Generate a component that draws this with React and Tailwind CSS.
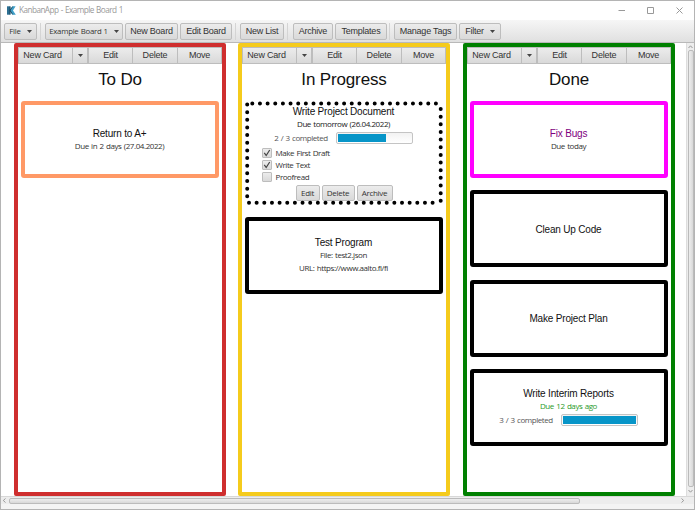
import React from "react";

const SANS = "font-['Liberation_Sans',Arial,sans-serif]";
const UI = "font-['Open_Sans','Noto_Sans',sans-serif]";
const FACE = "bg-linear-to-b from-[#ececec] to-[#d9d9d9] border border-[#bdbdbd]";

function Caret() {
  return (
    <svg width="5" height="3" viewBox="0 0 5 3" className="shrink-0">
      <path d="M0 0H5L2.5 3Z" fill="#444" />
    </svg>
  );
}

function ToolButton({ className, children }) {
  return (
    <div className={`flex h-[17px] shrink-0 items-center justify-center rounded-[2px] pt-px whitespace-nowrap text-[#333] ${FACE} ${className}`}>
      {children}
    </div>
  );
}

function Separator({ className }) {
  return <div className={`h-[17px] w-px shrink-0 bg-[#d4d4d4] ${className}`} />;
}

function Logo() {
  return (
    <svg width="9" height="9" viewBox="0 0 9 9" className="ml-[6px] shrink-0">
      <path d="M0 .3H3.4V8.7H0Z" fill="#2c6f92" />
      <path d="M8.6 .3H5.4L2.5 4.4L5.4 8.7H8.8L6 4.4Z" fill="#3f9fc8" />
      <path d="M3 .5V8.5M5.6 .6L3 4.4L5.6 8.4" stroke="#173c50" strokeWidth=".8" fill="none" />
    </svg>
  );
}

function TitleBar() {
  return (
    <div className="flex h-[19px] items-center bg-white">
      <Logo />
      <span className={`ml-[3px] text-[8.2px] tracking-[-0.55px] [word-spacing:0.7px] text-[#999] whitespace-nowrap ${UI}`}>KanbanApp - Example Board 1</span>
      <svg width="66" height="9" viewBox="0 0 66 9" className="mr-[10px] ml-auto" fill="none" stroke="#999" strokeWidth="1">
        <path d="M.5 4.5H7M29.5 1.5H35.5V7.5H29.5ZM58.5 1.5L64.5 7.5M64.5 1.5L58.5 7.5" />
      </svg>
    </div>
  );
}

function Toolbar() {
  return (
    <div className={`flex h-[23px] items-center border-b border-[#b9b9b9] bg-linear-to-b from-[#f6f6f6] to-[#e0e0e0] pl-[3px] text-[9px] tracking-[-0.25px] ${SANS}`}>
      <ToolButton className={`w-[33px] gap-[6px] text-[7.8px] ${UI}`}>File <Caret /></ToolButton>
      <Separator className="mr-1 ml-[3px]" />
      <ToolButton className={`w-[78px] gap-[6px] text-[7.8px] [word-spacing:0.4px] ${UI}`}>Example Board 1 <Caret /></ToolButton>
      <ToolButton className="ml-[2px] w-[53px]">New Board</ToolButton>
      <ToolButton className="ml-[2px] w-[52px]">Edit Board</ToolButton>
      <Separator className="mr-1 ml-[3px]" />
      <ToolButton className="w-[44px]">New List</ToolButton>
      <Separator className="mr-[5px] ml-[3px]" />
      <ToolButton className="w-[40px]">Archive</ToolButton>
      <ToolButton className="ml-[2px] w-[52px]">Templates</ToolButton>
      <Separator className="mr-1 ml-[2px]" />
      <ToolButton className="w-[63px] tracking-[-0.2px]">Manage Tags</ToolButton>
      <ToolButton className="ml-[2px] w-[42px] gap-[6px]">Filter <Caret /></ToolButton>
    </div>
  );
}

function ListHeader() {
  const cell = `flex h-[17px] items-center justify-center ${FACE}`;
  return (
    <div className="flex text-[9px] tracking-[-0.2px] text-[#333] whitespace-nowrap">
      <div className={`${cell} w-[54px] border-r-0 pr-[6px]`}>New Card</div>
      <div className={`${cell} w-[16px]`}><Caret /></div>
      <div className={`${cell} w-[45px]`}>Edit</div>
      <div className={`${cell} w-[45px] border-l-0`}>Delete</div>
      <div className={`${cell} flex-1 border-l-0`}>Move</div>
    </div>
  );
}

function Column({ title, color, className, children }) {
  return (
    <div className={`h-[453px] w-[212px] shrink-0 rounded-[2px] border-4 pt-0 ${SANS} ${color} ${className}`}>
      <ListHeader />
      <div className="h-[37px] pt-[6px] text-center text-[17px] leading-[20px] tracking-[-0.15px] text-[#111]">{title}</div>
      <div className="flex flex-col items-center gap-[12.3px] pr-px">{children}</div>
    </div>
  );
}

function Card({ color = "border-black", className = "", children }) {
  return (
    <div className={`flex h-[77px] w-[198px] flex-col items-center justify-center rounded-[3px] border-4 ${color} ${className}`}>
      {children}
    </div>
  );
}

function CardTitle({ className = "text-[#111]", children }) {
  return <div className={`text-[10px] leading-[13px] tracking-[-0.18px] whitespace-nowrap ${className}`}>{children}</div>;
}

function Note({ className = "text-[#333]", children }) {
  return <div className={`pb-[2px] text-[8px] leading-[11px] tracking-[-0.43px] [word-spacing:0.7px] whitespace-nowrap ${UI} ${className}`}>{children}</div>;
}

function Progress({ label, fill }) {
  return (
    <div className="flex h-[14px] items-center gap-[8px]">
      <Note className="text-[#555]">{label}</Note>
      <div className="h-[12px] w-[77px] rounded-[2px] border border-[#c4c4c4] bg-linear-to-b from-[#f2f2f2] to-white p-px">
        <div className={`h-full bg-[#0795c8] ${fill}`} />
      </div>
    </div>
  );
}

function Check({ checked, children }) {
  return (
    <div className="flex h-[12px] items-center gap-[4px]">
      <div className={`flex h-[10px] w-[10px] items-center justify-center rounded-[1px] ${FACE}`}>
        {checked && (
          <svg width="8" height="8" viewBox="0 0 8 8"><path d="M1.3 3.8L3.2 6.5L6.7 1" fill="none" stroke="#444" strokeWidth="1.2" /></svg>
        )}
      </div>
      <Note>{children}</Note>
    </div>
  );
}

function DottedOutline() {
  return (
    <svg width="198" height="105" viewBox="0 0 198 105" className="absolute inset-0" fill="none" stroke="#000" strokeWidth="4" strokeLinecap="round" strokeDasharray="0 7.65">
      <path d="M7.3 2.5H195" />
      <path d="M195.7 8V103" />
      <path d="M4 101.8H192" />
      <path d="M2.2 3.5V99" />
    </svg>
  );
}

function DocumentCard() {
  const btn = `flex h-[16px] items-center justify-center rounded-[2px] text-[8px] tracking-[-0.3px] text-[#333] ${UI} ${FACE}`;
  return (
    <div className="relative flex h-[104px] w-[198px] flex-col items-center pt-[4px]">
      <DottedOutline />
      <CardTitle>Write Project Document</CardTitle>
      <Note className="text-[#222]">Due tomorrow (26.04.2022)</Note>
      <Progress label="2 / 3 completed" fill="w-[48px]" />
      <div className="mt-[2px] flex w-full flex-col pl-[17px]">
        <Check checked>Make First Draft</Check>
        <Check checked>Write Text</Check>
        <Check>Proofread</Check>
      </div>
      <div className="mt-[2px] flex gap-[2px] pl-px">
        <div className={`${btn} w-[24px]`}>Edit</div>
        <div className={`${btn} w-[33px]`}>Delete</div>
        <div className={`${btn} w-[36px]`}>Archive</div>
      </div>
    </div>
  );
}

function VerticalScroll() {
  return (
    <div className="ml-auto flex w-[8px] flex-col items-center border-l border-[#ddd] bg-[#ededed]">
      <svg width="5" height="7" viewBox="0 0 5 7"><path d="M.5 5L2.5 2.8L4.5 5" fill="none" stroke="#999" /></svg>
      <div className="h-[437px] w-[6px] rounded-[2px] border border-[#bbb] bg-linear-to-r from-[#eee] to-[#d8d8d8]" />
      <svg width="5" height="8" viewBox="0 0 5 8"><path d="M.5 3L2.5 5.2L4.5 3" fill="none" stroke="#999" /></svg>
    </div>
  );
}

function HorizontalScroll() {
  return (
    <div className="flex h-[8px] items-center border-t border-[#d8d8d8] bg-[#ededed]">
      <svg width="8" height="5" viewBox="0 0 8 5"><path d="M4.5 .5L2.3 2.5L4.5 4.5" fill="none" stroke="#999" /></svg>
      <div className="h-[6px] w-[571px] rounded-[2px] border border-[#bbb] bg-linear-to-b from-[#eee] to-[#d8d8d8]" />
      <svg width="8" height="5" viewBox="0 0 8 5" className="mr-[8px] ml-auto"><path d="M3.5 .5L5.7 2.5L3.5 4.5" fill="none" stroke="#999" /></svg>
    </div>
  );
}

export default function App() {
  return (
    <div className="h-[510px] w-[695px] overflow-hidden border border-[#b4b4b4] bg-[#f4f4f4]">
      <TitleBar />
      <Toolbar />
      <div className="flex h-[453px] bg-white">
        <Column title="To Do" color="border-[#cf2e2e]" className="ml-[13px]">
          <Card color="border-[#ff9966]">
            <CardTitle>Return to A+</CardTitle>
            <Note>Due in 2 days (27.04.2022)</Note>
          </Card>
        </Column>
        <Column title="In Progress" color="border-[#f5cb1c]" className="ml-[12px]">
          <DocumentCard />
          <Card>
            <CardTitle>Test Program</CardTitle>
            <Note>File: test2.json</Note>
            <Note>URL: https://www.aalto.fi/fi</Note>
          </Card>
        </Column>
        <Column title="Done" color="border-[#008000]" className="ml-[13px]">
          <Card color="border-[#ff00ff]">
            <CardTitle className="text-[#800080]">Fix Bugs</CardTitle>
            <Note>Due today</Note>
          </Card>
          <Card className="pt-[2px]"><CardTitle>Clean Up Code</CardTitle></Card>
          <Card className="pt-px"><CardTitle>Make Project Plan</CardTitle></Card>
          <Card>
            <CardTitle>Write Interim Reports</CardTitle>
            <Note className="text-[#2a9a2a]">Due 12 days ago</Note>
            <Progress label="3 / 3 completed" fill="w-full" />
          </Card>
        </Column>
        <VerticalScroll />
      </div>
      <HorizontalScroll />
    </div>
  );
}
